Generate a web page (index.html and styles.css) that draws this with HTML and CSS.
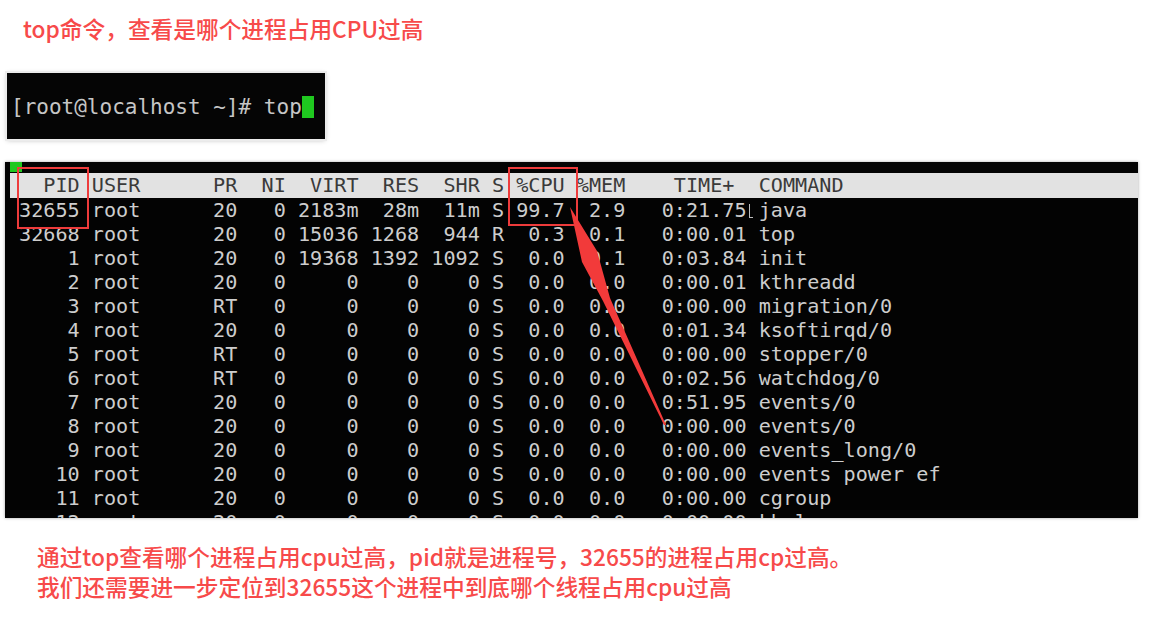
FILE: index.html
```html
<!DOCTYPE html>
<html lang="zh-CN">
<head>
    <meta charset="UTF-8">
    <meta name="viewport" content="width=device-width, initial-scale=1.0">
    <title>top命令查看进程</title>
    <link rel="stylesheet" href="styles.css">
</head>
<body>
    <div class="page">
        <p class="title">top命令，查看是哪个进程占用CPU过高</p>

        <div class="term-small">
            <span class="prompt">[root@localhost ~]# top</span><span class="cursor"></span>
        </div>

        <div class="term">
            <div class="term-bar"><span class="term-green"></span></div>
<pre class="term-head">  PID USER      PR  NI  VIRT  RES  SHR S %CPU %MEM    TIME+  COMMAND</pre>
<pre class="term-rows">32655 root      20   0 2183m  28m  11m S 99.7  2.9   0:21.75 java
32668 root      20   0 15036 1268  944 R  0.3  0.1   0:00.01 top
    1 root      20   0 19368 1392 1092 S  0.0  0.1   0:03.84 init
    2 root      20   0     0    0    0 S  0.0  0.0   0:00.01 kthreadd
    3 root      RT   0     0    0    0 S  0.0  0.0   0:00.00 migration/0
    4 root      20   0     0    0    0 S  0.0  0.0   0:01.34 ksoftirqd/0
    5 root      RT   0     0    0    0 S  0.0  0.0   0:00.00 stopper/0
    6 root      RT   0     0    0    0 S  0.0  0.0   0:02.56 watchdog/0
    7 root      20   0     0    0    0 S  0.0  0.0   0:51.95 events/0
    8 root      20   0     0    0    0 S  0.0  0.0   0:00.00 events/0
    9 root      20   0     0    0    0 S  0.0  0.0   0:00.00 events_long/0
   10 root      20   0     0    0    0 S  0.0  0.0   0:00.00 events power ef
   11 root      20   0     0    0    0 S  0.0  0.0   0:00.00 cgroup
   12 root      20   0     0    0    0 S  0.0  0.0   0:00.00 khelper</pre>
            <span class="ibeam"></span>
        </div>

        <div class="notes">
            <p>通过top查看哪个进程占用cpu过高，pid就是进程号，32655的进程占用cp过高。</p>
            <p>我们还需要进一步定位到32655这个进程中到底哪个线程占用cpu过高</p>
        </div>

        <span class="mark mark-pid"></span>
        <span class="mark mark-cpu"></span>
        <svg class="arrow" width="1173" height="633" viewBox="0 0 1173 633">
            <polygon points="570,207 597,251 610,298 666,425 664,425 603,301 582,262" fill="#f23a3a"/>
        </svg>
    </div>
</body>
</html>
```

FILE: styles.css
```css
body {
    margin: 0;
    background: #ffffff;
    font-family: "Noto Sans CJK SC", "Noto Sans", sans-serif;
}
.page {
    position: relative;
    width: 1173px;
    height: 633px;
    overflow: hidden;
}
.title {
    margin: 14px 0 0 23px;
    font-size: 22.7px;
    font-weight: 500;
    line-height: 30px;
    color: #f74a4a;
}
.term-small {
    display: flex;
    align-items: center;
    width: 318px;
    height: 66px;
    margin: 29px 0 0 7px;
    padding: 2px 0 0 4px;
    box-sizing: border-box;
    background: #050505;
    box-shadow: 0 0 0 2px #ececec, 0 1px 5px rgba(0, 0, 0, 0.3);
}
.prompt {
    font-family: "DejaVu Sans Mono", monospace;
    font-size: 21px;
    line-height: 24px;
    color: #c6c6c6;
    white-space: pre;
}
.cursor {
    display: inline-block;
    width: 12px;
    height: 22px;
    background: #1fc81f;
}
.term {
    position: relative;
    width: 1133px;
    height: 356px;
    margin: 23px 0 0 5px;
    padding-left: 5px;
    box-sizing: border-box;
    background: #030303;
    overflow: hidden;
    box-shadow: 0 0 3px rgba(0, 0, 0, 0.35);
}
.term-bar {
    height: 11px;
}
.term-green {
    display: block;
    width: 12px;
    height: 10px;
    background: #1fc81f;
}
.term-head,
.term-rows {
    margin: 0;
    padding-left: 9px;
    font-family: "DejaVu Sans Mono", monospace;
    font-size: 20.15px;
}
.term-head {
    height: 25px;
    line-height: 25px;
    background: #e2e2e2;
    color: #3a3a3a;
}
.term-rows {
    line-height: 24px;
    color: #cdcdcd;
}
.ibeam {
    position: absolute;
    left: 744px;
    top: 42px;
    width: 3px;
    height: 13px;
    border-left: 1px solid #bdbdbd;
    border-bottom: 1px solid #bdbdbd;
}
.notes {
    margin: 24px 0 0 37px;
    font-size: 22.7px;
    font-weight: 500;
    line-height: 30px;
    color: #f74a4a;
}
.notes p {
    margin: 0;
}
.mark {
    position: absolute;
    border: 2px solid #ee3b3b;
    box-sizing: border-box;
}
.mark-pid {
    left: 17px;
    top: 167px;
    width: 72px;
    height: 62px;
}
.mark-cpu {
    left: 508px;
    top: 167px;
    width: 70px;
    height: 59px;
}
.arrow {
    position: absolute;
    left: 0;
    top: 0;
    pointer-events: none;
}
```
